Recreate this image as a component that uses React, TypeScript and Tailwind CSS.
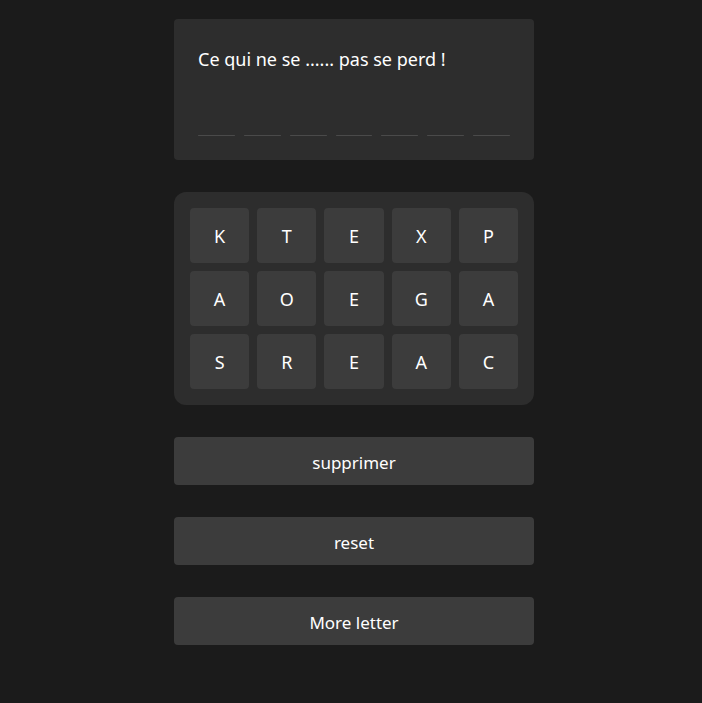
import React from 'react';

const rows = [
  ['K', 'T', 'E', 'X', 'P'],
  ['A', 'O', 'E', 'G', 'A'],
  ['S', 'R', 'E', 'A', 'C'],
];

const slots = 7;

export default function App() {
  return (
    <div
      className="min-h-[703px] w-full bg-[#1b1b1b] pl-[6px] text-white"
      style={{ fontFamily: '"Noto Sans", "Open Sans", sans-serif' }}
    >
      <div className="mx-auto flex w-[360px] flex-col gap-8 pt-[19px]">
        {/* question card */}
        <div className="flex h-[141px] flex-col rounded bg-[#2d2d2d] px-6 pt-[25px]">
          <p className="text-[18px] leading-[30px]">Ce qui ne se ...... pas se perd !</p>
          <div className="mt-[61px] flex gap-[9px]">
            {Array.from({ length: slots }).map((_, i) => (
              <div key={i} className="h-px w-[37px] rounded-full bg-[#4a4a4a]" />
            ))}
          </div>
        </div>

        {/* letter grid */}
        <div className="grid grid-cols-5 gap-2 rounded-xl bg-[#2d2d2d] p-4">
          {rows.flat().map((letter, i) => (
            <button
              key={i}
              className="flex h-[55px] items-center justify-center rounded bg-[#3c3c3c] pt-[2px] text-[18px] text-white"
            >
              {letter}
            </button>
          ))}
        </div>

        {/* actions */}
        {['supprimer', 'reset', 'More letter'].map((label) => (
          <button
            key={label}
            className="h-12 w-full rounded bg-[#3c3c3c] pt-1 text-[17px] text-white"
          >
            {label}
          </button>
        ))}
      </div>
    </div>
  );
}
